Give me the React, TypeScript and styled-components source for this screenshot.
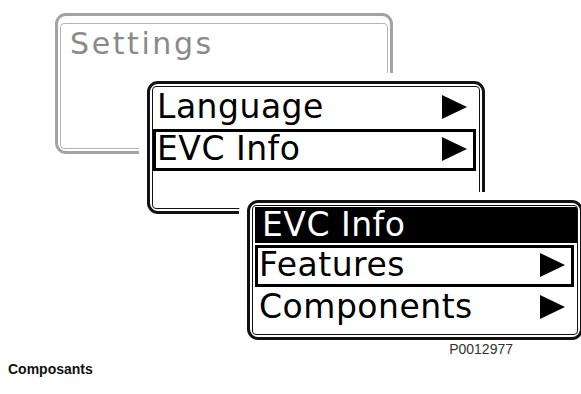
import React from "react";
import styled, { createGlobalStyle } from "styled-components";

const Global = createGlobalStyle`
  html, body { margin: 0; padding: 0; background: #ffffff; }
  body { width: 581px; height: 394px; overflow: hidden; }
`;

const Page = styled.div`
  width: 581px;
  height: 394px;
  background: #ffffff;
  font-family: "Liberation Sans", Arial, sans-serif;
`;

const Canvas = styled.div`
  position: relative;
  height: 340px;
`;

type Tone = "gray" | "black";

const WindowFrame = styled.div<{
  $left: number;
  $top: number;
  $width: number;
  $height: number;
  $tone: Tone;
  $padTop: number;
}>`
  position: absolute;
  left: ${(p) => p.$left}px;
  top: ${(p) => p.$top}px;
  width: ${(p) => p.$width}px;
  height: ${(p) => p.$height}px;
  box-sizing: border-box;
  border: 3px solid ${(p) => (p.$tone === "gray" ? "#a3a3a3" : "#111111")};
  border-radius: 11px;
  padding: ${(p) => p.$padTop}px 2px 2px 2px;
  background: #ffffff;
  box-shadow: 0 0 0 8px #ffffff;
`;

const Screen = styled.div<{ $tone: Tone }>`
  height: 100%;
  box-sizing: border-box;
  border: 1px solid ${(p) => (p.$tone === "gray" ? "#b5b5b5" : "#111111")};
  border-radius: 4px;
  display: flex;
  flex-direction: column;
  overflow: hidden;
`;

const Title = styled.div`
  font-family: "DejaVu Sans", Verdana, sans-serif;
  font-size: 30px;
  letter-spacing: 2.6px;
  color: #8a8a8a;
  padding: 3px 0 0 9px;
  line-height: 34px;
`;

const Header = styled.div`
  height: 36px;
  background: #000000;
  color: #ffffff;
  font-family: "DejaVu Sans", Verdana, sans-serif;
  font-size: 33px;
  letter-spacing: 0.5px;
  line-height: 35px;
  padding-left: 7px;
  margin: 1px 0 2px 2px;
`;

const Row = styled.div<{ $selected?: boolean; $inset?: number }>`
  height: 42px;
  box-sizing: border-box;
  display: flex;
  align-items: center;
  justify-content: space-between;
  border: 3px solid ${(p) => (p.$selected ? "#000000" : "transparent")};
  margin: 0 3px 0 ${(p) => p.$inset ?? 0}px;
  padding: 0 6px 3px 1px;
  font-family: "DejaVu Sans", Verdana, sans-serif;
  font-size: 33px;
  letter-spacing: 0.5px;
  color: #000000;
`;

const Label = styled.span`
  line-height: 36px;
`;

const Arrow = styled.svg`
  width: 25px;
  height: 24px;
  flex: none;
`;

const FigureId = styled.div`
  position: relative;
  text-align: right;
  padding-right: 68px;
  font-size: 14px;
  line-height: 16px;
  padding-top: 1px;
  color: #333333;
`;

const Caption = styled.div`
  margin-top: 4px;
  padding-left: 8px;
  font-size: 14px;
  line-height: 16px;
  font-weight: bold;
  color: #111111;
`;

const Triangle = () => (
  <Arrow viewBox="0 0 25 24">
    <polygon points="0,0 25,12 0,24" fill="#000" />
  </Arrow>
);

type Item = { label: string; selected?: boolean };

const MenuRow = ({ label, selected, inset }: Item & { inset?: number }) => (
  <Row $selected={selected} $inset={inset}>
    <Label>{label}</Label>
    <Triangle />
  </Row>
);

export default function App() {
  return (
    <Page>
      <Global />
      <Canvas>
        <WindowFrame $left={55} $top={13} $width={338} $height={141} $tone="gray" $padTop={7}>
          <Screen $tone="gray">
            <Title>Settings</Title>
          </Screen>
        </WindowFrame>
        <WindowFrame $left={147} $top={81} $width={338} $height={133} $tone="black" $padTop={2}>
          <Screen $tone="black">
            <MenuRow label="Language" />
            <MenuRow label="EVC Info" selected />
          </Screen>
        </WindowFrame>
        <WindowFrame $left={247} $top={200} $width={336} $height={140} $tone="black" $padTop={2}>
          <Screen $tone="black">
            <Header>EVC Info</Header>
            <MenuRow label="Features" selected inset={2} />
            <MenuRow label="Components" inset={2} />
          </Screen>
        </WindowFrame>
      </Canvas>
      <FigureId>P0012977</FigureId>
      <Caption>Composants</Caption>
    </Page>
  );
}
